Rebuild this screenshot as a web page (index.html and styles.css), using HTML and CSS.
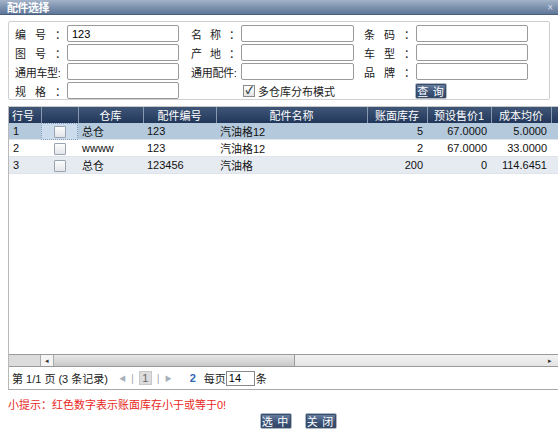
FILE: index.html
```html
<!DOCTYPE html>
<html>
<head>
<meta charset="utf-8">
<link rel="stylesheet" href="styles.css">
</head>
<body>
<div class="titlebar"><span class="title">配件选择</span><span class="close">×</span></div>

<div class="form">
  <div class="row">
    <label class="lb"><span>编</span><span>号</span><span>：</span></label><input class="ipt" value="123">
    <label class="lb lb2"><span>名</span><span>称</span><span>：</span></label><input class="ipt ipt2">
    <label class="lb lb3"><span>条</span><span>码</span><span>：</span></label><input class="ipt">
  </div>
  <div class="row">
    <label class="lb"><span>图</span><span>号</span><span>：</span></label><input class="ipt">
    <label class="lb lb2"><span>产</span><span>地</span><span>：</span></label><input class="ipt ipt2">
    <label class="lb lb3"><span>车</span><span>型</span><span>：</span></label><input class="ipt">
  </div>
  <div class="row">
    <label class="lb tight">通用车型:</label><input class="ipt">
    <label class="lb lb2 tight">通用配件:</label><input class="ipt ipt2">
    <label class="lb lb3"><span>品</span><span>牌</span><span>：</span></label><input class="ipt">
  </div>
  <div class="row">
    <label class="lb"><span>规</span><span>格</span><span>：</span></label><input class="ipt">
    <div class="chkwrap"><span class="chk on">✓</span>多仓库分布模式</div>
    <button class="btn">查 询</button>
  </div>
</div>

<div class="grid">
  <div class="gridinner">
    <table class="tbl">
      <colgroup>
        <col style="width:32px"><col style="width:37px"><col style="width:65px"><col style="width:73px"><col style="width:151px"><col style="width:60px"><col style="width:64px"><col style="width:60px"><col style="width:40px">
      </colgroup>
      <thead>
        <tr><th class="l">行号</th><th></th><th>仓库</th><th>配件编号</th><th>配件名称</th><th>账面库存</th><th>预设售价1</th><th>成本均价</th><th></th></tr>
      </thead>
      <tbody>
        <tr class="sel"><td>1</td><td class="cc focus"><span class="box"></span></td><td>总仓</td><td>123</td><td>汽油格12</td><td class="r">5</td><td class="r">67.0000</td><td class="r">5.0000</td><td></td></tr>
        <tr><td>2</td><td class="cc"><span class="box"></span></td><td>wwww</td><td>123</td><td>汽油格12</td><td class="r">2</td><td class="r">67.0000</td><td class="r">33.0000</td><td></td></tr>
        <tr class="alt"><td>3</td><td class="cc"><span class="box"></span></td><td>总仓</td><td>123456</td><td>汽油格</td><td class="r">200</td><td class="r">0</td><td class="r">114.6451</td><td></td></tr>
      </tbody>
    </table>
    <div class="filler"></div>
    <div class="hscroll">
      <div class="frozen"></div>
      <div class="arrow">◂</div>
      <div class="thumb"></div>
      <div class="track"><span class="rarrow">▸</span></div>
    </div>
  </div>
  <div class="pager">
    <span class="ptext">第 1/1 页 (3 条记录)</span>
    <span class="pico gray">◀</span><span class="sep">|</span><span class="pnum">1</span><span class="sep">|</span><span class="pico gray">▶</span>
    <span class="refresh">2</span>
    <span class="per">每页</span><input class="pin" value="14"><span>条</span>
  </div>
</div>

<div class="hint">小提示：红色数字表示账面库存小于或等于0!</div>

<div class="actions">
  <button class="btn">选 中</button>
  <button class="btn">关 闭</button>
</div>
</body>
</html>
```

FILE: styles.css
```css
html, body {
  margin: 0;
  padding: 0;
  background: #ffffff;
}
body {
  width: 558px;
  height: 432px;
  overflow: hidden;
  font-family: "Liberation Sans", "Noto Sans CJK SC", sans-serif;
  font-size: 11px;
  color: #111;
}
.titlebar {
  height: 15px;
  background: linear-gradient(#a3b3c8, #7e93b0 50%, #5f7697);
  display: flex;
  align-items: center;
  justify-content: space-between;
  padding: 0 5px 0 7px;
  border-bottom: 1px solid #4b607f;
  box-sizing: border-box;
}
.title {
  color: #fff;
  font-weight: bold;
  font-size: 11px;
  letter-spacing: -0.5px;
}
.close {
  color: #d8dee8;
  font-size: 10px;
}
.form {
  margin: 6px 0 0 8px;
  width: 542px;
  height: 79px;
  box-sizing: border-box;
  border: 1px solid #cfcfcf;
  border-radius: 2px;
  padding: 3px 0 0 6px;
  display: flex;
  flex-direction: column;
  gap: 2px;
}
.row {
  display: flex;
  align-items: center;
  height: 17px;
}
.lb {
  width: 52px;
  box-sizing: border-box;
  padding-right: 1px;
  display: flex;
  justify-content: space-between;
  font-size: 11px;
  color: #222;
}
.lb span:last-child { width: 11px; }
.lb2 { width: 62px; padding-left: 12px; }
.lb3 { width: 62px; padding-left: 10px; }
.tight { justify-content: flex-start; letter-spacing: -0.3px; }
.ipt {
  width: 112px;
  height: 17px;
  box-sizing: border-box;
  border: 1px solid #9a9a9a;
  border-radius: 2px;
  padding: 0 4px;
  font-family: "Liberation Sans", "Noto Sans CJK SC", sans-serif;
  font-size: 11px;
  margin: 0;
  background: #fff;
}
.ipt2 { width: 113px; }
.chkwrap {
  margin-left: 64px;
  width: 172px;
  display: flex;
  align-items: center;
  gap: 3px;
  color: #222;
}
.chk {
  width: 10px;
  height: 10px;
  border: 1px solid #8a8a8a;
  background: linear-gradient(#fff, #e4e4e4);
  font-size: 10px;
  line-height: 10px;
  text-align: center;
  color: #233;
  font-weight: bold;
}
.btn {
  height: 16px;
  width: 32px;
  padding: 0;
  border: 1px solid #aeb9c8;
  outline: 1px solid #3a4b66;
  outline-offset: -2px;
  border-radius: 2px;
  background: linear-gradient(#6d84a6, #3d5479 55%, #2f4466);
  color: #fff;
  font-family: "Noto Sans CJK SC", sans-serif;
  font-size: 11px;
  line-height: 14px;
  letter-spacing: 1px;
}
.grid {
  margin: 6px 0 0 8px;
  width: 550px;
  height: 284px;
  border-left: 1px solid #b8b8b8;
  border-bottom: 1px solid #a8a8a8;
  border-top: 1px solid #c8c8c8;
  box-sizing: border-box;
  display: flex;
  flex-direction: column;
}
.gridinner {
  flex: 1;
  display: flex;
  flex-direction: column;
  overflow: hidden;
}
.tbl {
  border-collapse: collapse;
  table-layout: fixed;
  width: 582px;
}
.tbl th {
  height: 14px;
  padding: 0 3px;
  background: linear-gradient(#3f5677, #22375a);
  color: #fff;
  font-weight: normal;
  font-size: 11px;
  border-right: 1px solid #8898b0;
  text-align: center;
  white-space: nowrap;
  overflow: hidden;
}
.tbl th.l { text-align: left; }
.tbl td {
  height: 15px;
  padding: 0 4px;
  border-bottom: 1px solid #dfe4ea;
  white-space: nowrap;
  overflow: hidden;
  font-size: 11px;
}
.tbl td.r { text-align: right; }
.tbl td.cc { text-align: center; padding: 0; }
.tbl tr.sel td { background: #b5c9dc; }
.tbl tr.sel td.focus { background: #cddced; outline: 1px dotted #7f9cbd; outline-offset: -1px; }
.tbl tr.alt td { background: #e6ebf2; }
.box {
  display: inline-block;
  width: 10px;
  height: 10px;
  border: 1px solid #9aa4b0;
  border-radius: 1px;
  background: linear-gradient(#fdfdfd, #e2e5e9);
  vertical-align: middle;
}
.filler { flex: 1; }
.hscroll {
  height: 13px;
  display: flex;
  border-top: 1px solid #9a9a9a;
  border-bottom: 1px solid #9a9a9a;
  box-sizing: border-box;
  background: #ececec;
}
.frozen {
  width: 31px;
  background: #dcdcdc;
}
.arrow {
  width: 12px;
  border-left: 1px solid #aaa;
  border-right: 1px solid #aaa;
  background: #f4f4f4;
  font-size: 7px;
  line-height: 11px;
  text-align: center;
  color: #333;
}
.thumb {
  width: 240px;
  background: linear-gradient(#e8e8e8, #c9c9c9);
  border-right: 1px solid #999;
}
.track {
  flex: 1;
  background: linear-gradient(#f2f2f2, #e4e4e4);
  display: flex;
  justify-content: flex-end;
  align-items: center;
  padding-right: 6px;
  font-size: 7px;
  color: #333;
}
.pager {
  height: 22px;
  display: flex;
  align-items: center;
  padding-left: 3px;
  color: #222;
  font-size: 11px;
}
.ptext { margin-right: 11px; }
.pico { font-size: 7px; color: #a8b0bb; }
.sep { color: #aaa; margin: 0 5px; }
.pnum {
  width: 13px;
  height: 14px;
  background: #dcdcdc;
  border: 1px solid #c8c8c8;
  box-sizing: border-box;
  text-align: center;
  line-height: 12px;
  color: #666;
}
.refresh {
  margin-left: 18px;
  color: #2f68b4;
  font-weight: bold;
}
.per { margin-left: 8px; }
.pin {
  width: 29px;
  height: 15px;
  box-sizing: border-box;
  border: 1px solid #888;
  padding: 0 2px;
  margin: 0 1px 0 0;
  font-family: "Liberation Sans", sans-serif;
  font-size: 11px;
}
.hint {
  margin: 8px 0 0 8px;
  height: 14px;
  line-height: 14px;
  color: #e8271d;
  font-size: 11px;
}
.actions {
  margin-top: 1px;
  display: flex;
  justify-content: center;
  gap: 13px;
  padding-left: 38px;
}
```
